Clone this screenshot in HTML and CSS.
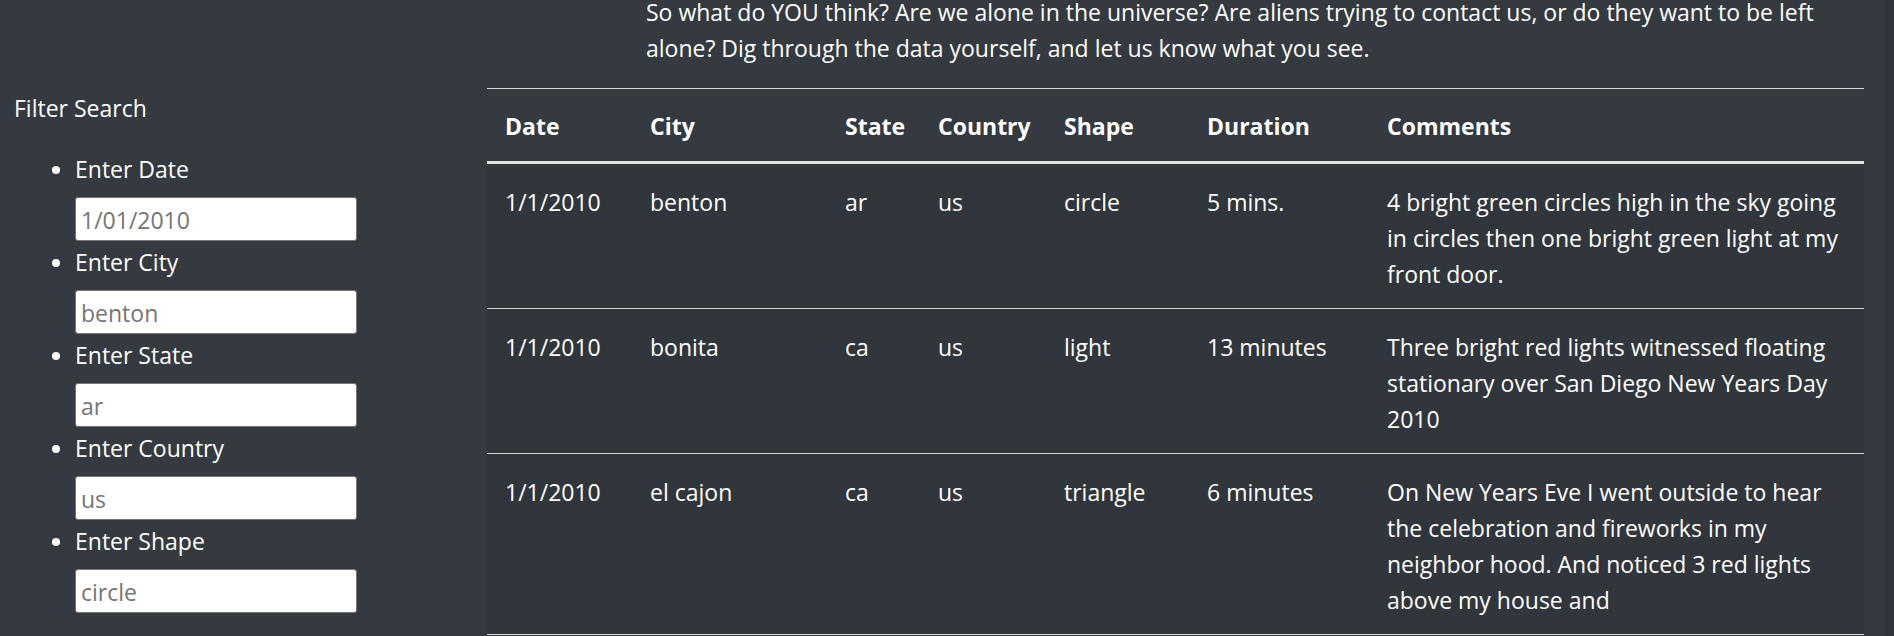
FILE: index.html
```html
<!DOCTYPE html>
<html lang="en">
<head>
<meta charset="utf-8">
<title>UFO Sightings</title>
<link rel="stylesheet" href="styles.css">
</head>
<body>
<div class="page">
  <aside class="sidebar">
    <div class="filter-title">Filter Search</div>
    <ul class="filters">
      <li class="filter"><label for="f-date">Enter Date</label><input id="f-date" type="text" placeholder="1/01/2010"></li>
      <li class="filter"><label for="f-city">Enter City</label><input id="f-city" type="text" placeholder="benton"></li>
      <li class="filter"><label for="f-state">Enter State</label><input id="f-state" type="text" placeholder="ar"></li>
      <li class="filter"><label for="f-country">Enter Country</label><input id="f-country" type="text" placeholder="us"></li>
      <li class="filter"><label for="f-shape">Enter Shape</label><input id="f-shape" type="text" placeholder="circle"></li>
    </ul>
  </aside>
  <main class="content">
    <p class="intro">So what do YOU think? Are we alone in the universe? Are aliens trying to contact us, or do they want to be left alone? Dig through the data yourself, and let us know what you see.</p>
    <table class="ufo-table">
      <colgroup>
        <col class="c-date">
        <col class="c-city">
        <col class="c-state">
        <col class="c-country">
        <col class="c-shape">
        <col class="c-duration">
        <col class="c-comments">
      </colgroup>
      <thead>
        <tr><th>Date</th><th>City</th><th>State</th><th>Country</th><th>Shape</th><th>Duration</th><th>Comments</th></tr>
      </thead>
      <tbody>
        <tr><td>1/1/2010</td><td>benton</td><td>ar</td><td>us</td><td>circle</td><td>5 mins.</td><td>4 bright green circles high in the sky going in circles then one bright green light at my front door.</td></tr>
        <tr><td>1/1/2010</td><td>bonita</td><td>ca</td><td>us</td><td>light</td><td>13 minutes</td><td>Three bright red lights witnessed floating stationary over San Diego New Years Day 2010</td></tr>
        <tr><td>1/1/2010</td><td>el cajon</td><td>ca</td><td>us</td><td>triangle</td><td>6 minutes</td><td>On New Years Eve I went outside to hear the celebration and fireworks in my neighbor hood. And noticed 3 red lights above my house and</td></tr>
      </tbody>
    </table>
  </main>
</div>
</body>
</html>
```

FILE: styles.css
```css
html {
  background: #30353b;
}

body {
  margin: 0;
  height: 636px;
  overflow: hidden;
  font-family: "Open Sans", "Noto Sans", sans-serif;
  font-size: 23px;
  line-height: 36px;
  color: #ffffff;
}

.page {
  display: flex;
  align-items: flex-start;
  margin-right: 9px;
  min-height: 636px;
  background: #343a40;
}

.sidebar {
  flex: 0 0 487px;
  box-sizing: border-box;
  padding: 90px 0 0 14px;
}

.filter-title {
  line-height: 36px;
}

.filters {
  margin: 24px 0 0;
  padding-left: 61px;
  list-style: disc;
}

.filter label {
  display: block;
  line-height: 36px;
  padding-top: 1px;
  margin-bottom: -1px;
}

.filter input {
  display: block;
  box-sizing: border-box;
  width: 282px;
  height: 44px;
  margin: 11px 0 2px;
  padding: 2px 5px 0;
  border: 1px solid #767676;
  border-radius: 3px;
  background: #ffffff;
  font-family: "Open Sans", "Noto Sans", sans-serif;
  font-size: 23px;
  color: #333333;
}

.filter input::placeholder {
  color: #757575;
  opacity: 1;
}

.content {
  flex: 1;
  min-width: 0;
  padding-right: 21px;
  margin-top: -6px;
}

.intro {
  margin: 0 0 22px;
  padding-left: 159px;
}

.ufo-table {
  width: 100%;
  border-collapse: collapse;
  table-layout: fixed;
}

.c-date { width: 145px; }
.c-city { width: 195px; }
.c-state { width: 93px; }
.c-country { width: 126px; }
.c-shape { width: 143px; }
.c-duration { width: 180px; }

.ufo-table th {
  padding: 19px 18px 17px;
  text-align: left;
  font-weight: 700;
  vertical-align: bottom;
  border-top: 1px solid #d3d6da;
  border-bottom: 3px solid #dee2e6;
}

.ufo-table tbody {
  background: #31363c;
}

.ufo-table td {
  padding: 20px 18px 16px;
  vertical-align: top;
  border-bottom: 1px solid #d3d6da;
}
```
